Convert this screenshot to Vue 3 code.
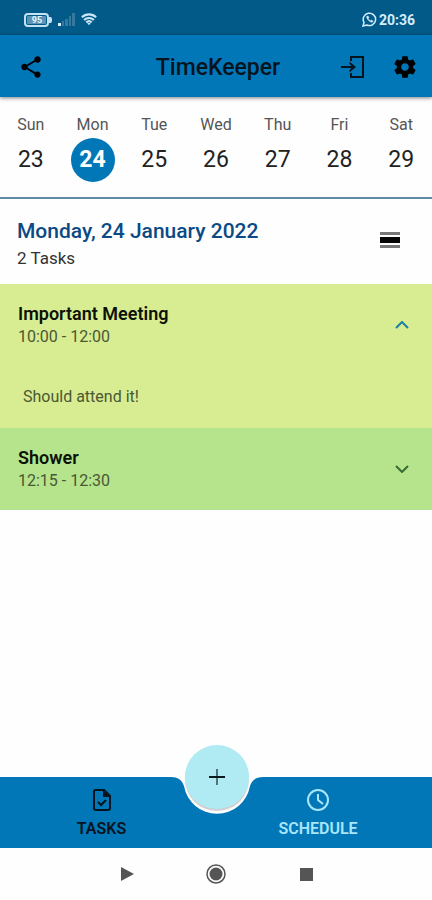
<template>
  <div class="screen">
    <div class="status-bar">
      <div class="status-group">
        <svg width="28" height="14" viewBox="0 0 28 14" role="img" aria-label="Battery 95%">
          <rect x="1" y="1" width="23" height="12" rx="3" fill="none" stroke="#c5e2f5" stroke-width="2" />
          <rect x="3" y="3" width="19" height="8" rx="1" fill="#5c93b5" />
          <path d="M25 4h1.500q1.500 0 1.500 3t-1.500 3H25z" fill="#c5e2f5" />
          <text x="13" y="10" text-anchor="middle" class="battery-text">95</text>
        </svg>
        <svg class="signal" width="17" height="13" viewBox="0 0 17 13" aria-hidden="true">
          <path d="M0 10h3v3H0z" fill="#d8efff" />
          <path d="M4 8h2v5H4zM7 6h3v7H7zM11 3h2v10h-2zM14 0h3v13h-3z" fill="#37789f" />
        </svg>
        <svg width="16" height="13" viewBox="0 0 18 14" fill="none" stroke="#c9e6f8" stroke-width="2.400" aria-hidden="true">
          <path d="M1 4.500a11.500 11.500 0 0 1 16 0M3.500 7.500a8 8 0 0 1 11 0M6 10.200a4.500 4.500 0 0 1 6 0" />
          <path d="M9 13.500l-2-2.500h4z" fill="#c9e6f8" stroke="none" />
        </svg>
      </div>
      <div class="status-group status-right">
        <svg width="15" height="15" viewBox="0 0 15 15" fill="none" stroke="#d4edfc" aria-hidden="true">
          <path d="M1 14l1-3.600A6.200 6.200 0 1 1 4.800 13z" stroke-width="1.500" />
          <path d="M4.800 4.300c-.8 1.800 2.600 6 5.300 6l1.100-1.300-2-1-.8.900C7.300 8.300 6.500 7.500 6.200 6.600l.7-.8-.7-1.700z" fill="#d4edfc" stroke-width="0.500" />
        </svg>
        <span>20:36</span>
      </div>
    </div>

    <header class="app-bar">
      <button type="button" aria-label="Share">
        <svg width="26" height="26" viewBox="0 0 24 24">
          <path d="M18 16.080c-.76 0-1.440.3-1.960.77L8.910 12.700c.05-.23.09-.46.09-.7s-.04-.47-.09-.7l7.050-4.110c.54.5 1.250.81 2.040.81 1.660 0 3-1.340 3-3s-1.340-3-3-3-3 1.340-3 3c0 .24.04.47.09.7L8.040 9.810C7.500 9.310 6.790 9 6 9c-1.660 0-3 1.340-3 3s1.340 3 3 3c.79 0 1.500-.31 2.040-.81l7.120 4.160c-.05.21-.08.43-.08.65 0 1.610 1.310 2.920 2.920 2.920s2.920-1.310 2.920-2.920-1.310-2.920-2.920-2.920z" />
        </svg>
      </button>
      <h1>TimeKeeper</h1>
      <div class="bar-actions">
        <button type="button" aria-label="Log in">
          <svg width="26" height="26" viewBox="0 0 26 26">
            <path d="M12 7V3h12v20H12v-4M2 13h12" fill="none" stroke="#07141d" stroke-width="2" />
            <path d="M11 8l6 5-6 5-1-1 3-4-3-4z" fill="#07141d" />
          </svg>
        </button>
        <button type="button" aria-label="Settings">
          <svg width="26" height="26" viewBox="0 0 24 24">
            <path d="M19.430 12.980c.04-.32.07-.64.07-.98s-.03-.66-.07-.98l2.110-1.650c.19-.15.24-.42.12-.64l-2-3.460c-.12-.22-.39-.3-.61-.22l-2.490 1c-.52-.4-1.080-.73-1.690-.98l-.38-2.650C14.460 2.180 14.250 2 14 2h-4c-.25 0-.46.18-.49.42l-.38 2.650c-.61.25-1.170.59-1.690.98l-2.490-1c-.23-.09-.49 0-.61.22l-2 3.460c-.13.22-.07.49.12.64l2.110 1.650c-.04.32-.07.65-.07.98s.03.66.07.98l-2.110 1.650c-.19.15-.24.42-.12.64l2 3.460c.12.22.39.3.61.22l2.490-1c.52.4 1.080.73 1.690.98l.38 2.650c.03.24.24.42.49.42h4c.25 0 .46-.18.49-.42l.38-2.650c.61-.25 1.170-.59 1.690-.98l2.490 1c.23.09.49 0 .61-.22l2-3.460c.12-.22.07-.49-.12-.64l-2.110-1.650zM12 15.500c-1.930 0-3.500-1.570-3.500-3.500s1.570-3.500 3.500-3.500 3.500 1.570 3.500 3.500-1.570 3.500-3.500 3.500z" />
          </svg>
        </button>
      </div>
    </header>

    <nav class="week" aria-label="Week">
      <button
        v-for="day in days"
        :key="day.date"
        type="button"
        class="day"
        :class="{ selected: day.date === selectedDate }"
        @click="selectedDate = day.date"
      >
        <span class="day-name">{{ day.name }}</span>
        <span class="day-date">{{ day.date }}</span>
      </button>
    </nav>

    <main>
      <div class="day-header">
        <div>
          <h2>{{ fullDay }}, {{ selectedDate }} January 2022</h2>
          <p>{{ tasks.length }} Tasks</p>
        </div>
        <button type="button" class="view-toggle" aria-label="Change view">
          <svg width="20" height="16" viewBox="0 0 20 16">
            <path d="M0 0h20v3H0zM0 13h20v3H0z" fill="#777" />
            <path d="M0 5h20v6H0z" fill="#050505" />
          </svg>
        </button>
      </div>

      <section
        v-for="task in tasks"
        :key="task.title"
        class="task"
        :class="[task.color, { open: task.open }]"
      >
        <button type="button" class="task-head" :aria-expanded="task.open" @click="task.open = !task.open">
          <span>
            <strong>{{ task.title }}</strong>
            <span class="task-time">{{ task.time }}</span>
          </span>
          <svg class="chevron" width="14" height="8" viewBox="0 0 14 8" fill="none" stroke="currentColor" stroke-width="2">
            <path v-if="task.open" d="M1 7l6-6 6 6" />
            <path v-else d="M1 1l6 6 6-6" />
          </svg>
        </button>
        <p v-if="task.open && task.note" class="task-note">{{ task.note }}</p>
      </section>
    </main>

    <footer>
      <nav class="tab-bar" aria-label="Main">
        <a href="#tasks" class="tab tab-left">
          <svg width="26" height="26" viewBox="0 0 26 26" fill="none" stroke="currentColor" stroke-width="2">
            <path d="M6 3h9l6 6v12q0 2-2 2H7q-2 0-2-2V5q0-2 1-2z" />
            <path d="M14 3v7h7z" fill="currentColor" stroke="none" />
            <path d="M9 15l3 3 5-5" />
          </svg>
          <span>TASKS</span>
        </a>
        <div class="notch">
          <svg width="100" height="71" viewBox="0 0 100 71" aria-hidden="true">
            <path d="M0 0H5C12 0 16 3 18 9A33.500 33.500 0 0 0 84 9C86 3 90 0 97 0H100V71H0Z" fill="#0277b8" />
          </svg>
          <button type="button" class="add" aria-label="Add task">
            <svg width="16" height="16" viewBox="0 0 16 16">
              <path d="M7 0h2v16H7z" fill="#4d757b" />
              <path d="M0 7h16v2H0z" fill="#0b1a1c" />
            </svg>
          </button>
        </div>
        <a href="#schedule" class="tab tab-right active" aria-current="page">
          <svg width="26" height="26" viewBox="0 0 26 26" fill="none" stroke="currentColor" stroke-width="2">
            <circle cx="13" cy="13" r="10" />
            <path d="M13 7v6l5 4" />
          </svg>
          <span>SCHEDULE</span>
        </a>
      </nav>
      <div class="system-nav">
        <button type="button" aria-label="Back">
          <svg width="20" height="20" viewBox="0 0 20 20" fill="#555"><path d="M5 3v14l13-7z" /></svg>
        </button>
        <button type="button" aria-label="Home">
          <svg width="20" height="20" viewBox="0 0 20 20">
            <circle cx="10" cy="10" r="9" fill="none" stroke="#555" stroke-width="1.500" />
            <circle cx="10" cy="10" r="6.500" fill="#555" />
          </svg>
        </button>
        <button type="button" aria-label="Recent apps">
          <svg width="20" height="20" viewBox="0 0 20 20" fill="#555"><path d="M4 4h13v13H4z" /></svg>
        </button>
      </div>
    </footer>
  </div>
</template>

<script setup>
import { computed, ref } from 'vue'

const days = [
  { name: 'Sun', full: 'Sunday', date: 23 },
  { name: 'Mon', full: 'Monday', date: 24 },
  { name: 'Tue', full: 'Tuesday', date: 25 },
  { name: 'Wed', full: 'Wednesday', date: 26 },
  { name: 'Thu', full: 'Thursday', date: 27 },
  { name: 'Fri', full: 'Friday', date: 28 },
  { name: 'Sat', full: 'Saturday', date: 29 }
]

const selectedDate = ref(24)
const fullDay = computed(() => days.find((day) => day.date === selectedDate.value).full)

const tasks = ref([
  { title: 'Important Meeting', time: '10:00 - 12:00', note: 'Should attend it!', color: 'lime', open: true },
  { title: 'Shower', time: '12:15 - 12:30', note: '', color: 'green', open: false }
])
</script>

<style>
body {
  margin: 0;
  background: #fefefe;
}
</style>

<style scoped>
.screen {
  display: flex;
  flex-direction: column;
  min-height: 100vh;
  font-family: Roboto, "Liberation Sans", sans-serif;
  color: #222;
}

button {
  display: block;
  margin: 0;
  padding: 0;
  border: 0;
  background: none;
  color: inherit;
  font: inherit;
  cursor: pointer;
}

svg {
  display: block;
}

h1,
h2,
p {
  margin: 0;
}

.status-bar {
  display: flex;
  align-items: center;
  justify-content: space-between;
  height: 35px;
  padding: 4px 17px 0 24px;
  box-sizing: border-box;
  background: #025a88;
}

.status-group {
  display: flex;
  align-items: center;
  gap: 6px;
}

.battery-text {
  fill: #e4f5ff;
  font-size: 9px;
  font-weight: 700;
}

.status-right {
  gap: 2px;
  color: #d4edfc;
  font-size: 14px;
  font-weight: 700;
}

.app-bar {
  position: relative;
  display: grid;
  grid-template-columns: 1fr auto 1fr;
  align-items: center;
  height: 62px;
  padding: 2px 14px 0 18px;
  box-sizing: border-box;
  background: #0277b8;
  box-shadow: 0 1px 4px rgba(0, 0, 0, 0.5);
}

.app-bar h1 {
  color: #07141d;
  font-size: 23px;
  font-weight: 500;
}

.bar-actions {
  display: flex;
  justify-content: flex-end;
  gap: 27px;
}

.week {
  display: grid;
  grid-template-columns: repeat(7, 1fr);
  padding: 16px 0 15px;
  border-bottom: 2px solid #5e8ca4;
}

.day {
  display: flex;
  flex-direction: column;
  align-items: center;
  gap: 2px;
}

.day-name {
  color: #555;
  font-size: 16px;
  line-height: 23px;
}

.day-date {
  width: 44px;
  border-radius: 50%;
  color: #222;
  font-size: 23px;
  line-height: 44px;
}

.selected .day-date {
  background: #0277b8;
  color: #fff;
  font-weight: 700;
}

.day-header {
  display: flex;
  align-items: flex-start;
  justify-content: space-between;
  padding: 17px 32px 14px 17px;
}

.day-header h2 {
  color: #0b4a85;
  font-size: 21px;
  font-weight: 500;
  line-height: 30px;
}

.day-header p {
  color: #333;
  font-size: 17px;
  line-height: 24px;
}

.view-toggle {
  padding: 16px 0;
}

.task-head {
  display: flex;
  align-items: center;
  justify-content: space-between;
  width: 100%;
  padding: 18px 23px 18px 18px;
  text-align: left;
}

.task-head strong,
.task-time {
  display: block;
}

.task-head strong {
  color: #0c1206;
  font-size: 18px;
  font-weight: 600;
  line-height: 24px;
}

.task-time {
  font-size: 16px;
  line-height: 22px;
}

.task-time,
.task-note {
  color: #4a5735;
}

.lime {
  background: #d8ed92;
}

.green {
  background: #b5e48c;
}

.chevron {
  color: #3a6b35;
}

.open .chevron {
  color: #1a7fa3;
}

.task-note {
  padding: 19px 23px;
  font-size: 16px;
  line-height: 24px;
}

footer {
  margin-top: auto;
}

.tab-bar {
  display: grid;
  grid-template-columns: 1fr 100px 1fr;
}

.tab {
  display: flex;
  flex-direction: column;
  align-items: center;
  padding: 10px 0 7px;
  background: #0277b8;
  color: #07141d;
  font-size: 16px;
  font-weight: 600;
  line-height: 24px;
  text-decoration: none;
}

.tab svg {
  margin-bottom: 4px;
}

.tab-left {
  padding-left: 37px;
}

.tab-right {
  padding-right: 62px;
}

.tab.active {
  color: #a8e6fa;
}

.notch {
  position: relative;
}

.add {
  position: absolute;
  top: -32px;
  left: 19px;
  display: flex;
  align-items: center;
  justify-content: center;
  width: 64px;
  height: 64px;
  border-radius: 50%;
  background: #b0ebf4;
  box-shadow: 0 2px 1px #cdced3;
}

.system-nav {
  display: flex;
  justify-content: center;
  gap: 70px;
  padding: 16px 0;
}
</style>
